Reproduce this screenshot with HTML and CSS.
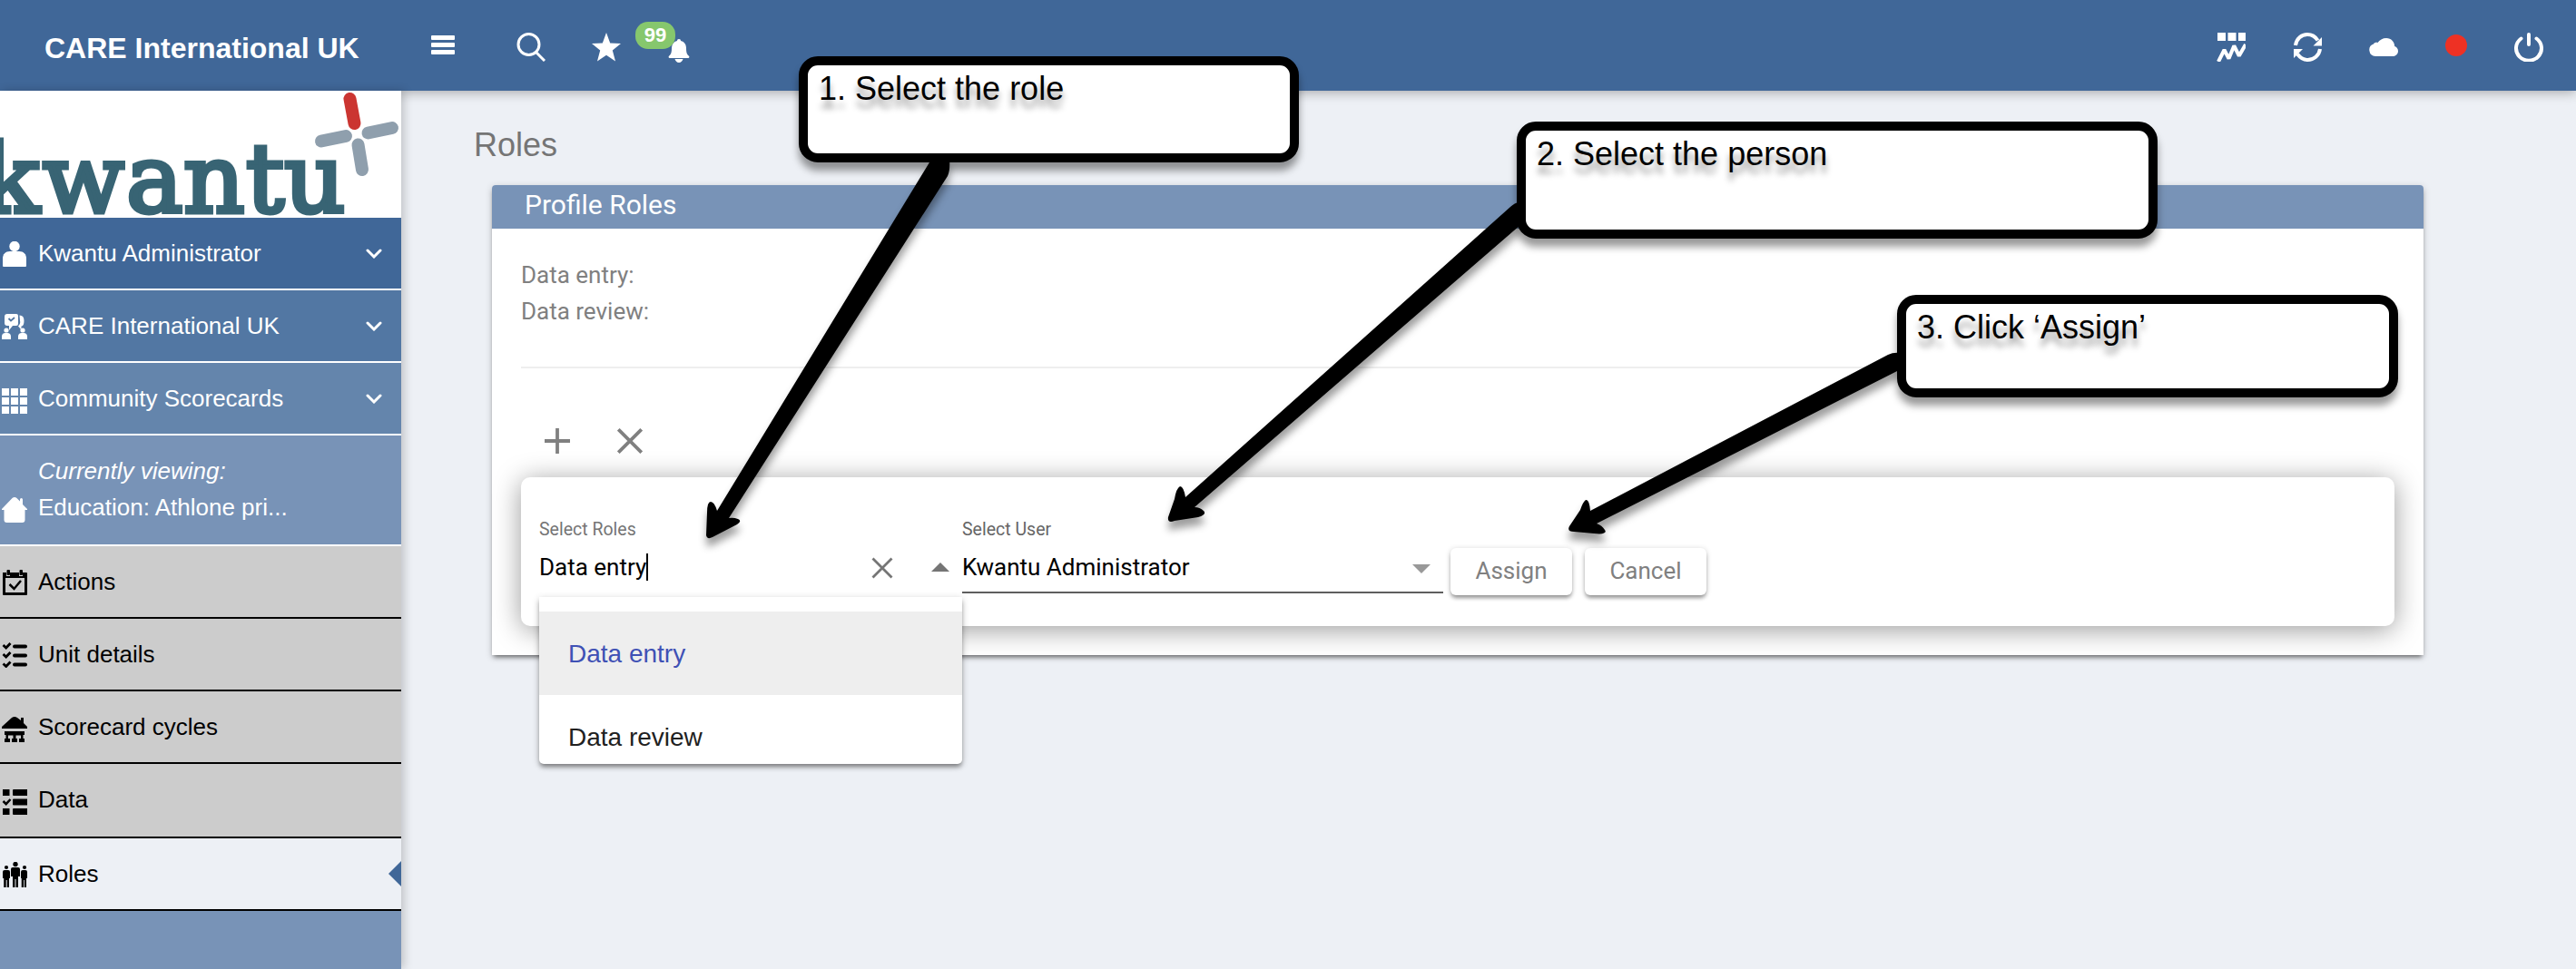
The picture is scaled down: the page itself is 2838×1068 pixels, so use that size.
FILE: index.html
```html
<!DOCTYPE html>
<html lang="en">
<head>
    <meta charset="UTF-8">
    <meta name="viewport" content="width=device-width, initial-scale=1.0">
    <title>Roles</title>
    <link rel="stylesheet" href="styles.css">
</head>
<body>

    <!-- Top bar -->
    <header class="topbar">
        <div class="brand">CARE International UK</div>
        <svg class="icon-menu" width="26" height="22" viewBox="0 0 26 22" fill="#fff">
            <rect x="0" y="0" width="26" height="5" rx="1"/>
            <rect x="0" y="8" width="26" height="5" rx="1"/>
            <rect x="0" y="16" width="26" height="5" rx="1"/>
        </svg>
        <svg class="icon-search" width="32" height="32" viewBox="0 0 32 32" fill="none" stroke="#fff" stroke-width="3">
            <circle cx="13.5" cy="13" r="11.5"/>
            <path d="M21.5 21.5L31 31"/>
        </svg>
        <svg class="icon-star" width="32" height="32" viewBox="0 0 32 32" fill="#fff">
            <path d="M16 0l4.2 11.5L32 12l-9.2 7.6L26 31.5 16 24.8 6 31.5l3.2-11.9L0 12l11.8-.5z"/>
        </svg>
        <div class="bell">
            <svg width="24" height="26" viewBox="0 0 24 26" fill="#fff">
                <path d="M12 0c1.4 0 2 .9 2 2 4 1 6 4 6 8.500 0 5.500 1.500 7 3 8.300.8.700.5 2.200-.8 2.200H1.800C.5 21 .2 19.500 1 18.800c1.500-1.300 3-2.800 3-8.300C4 6 6 3 10 2c0-1.100.6-2 2-2zM7.500 22h9c-.5 2.300-2.300 4-4.500 4s-4-1.700-4.500-4z"/>
            </svg>
            <span class="badge">99</span>
        </div>

        <div class="topbar-right">
            <svg width="32" height="32" viewBox="0 0 32 32">
                <path fill="#fff" d="M1 0h9v9H1zM12.500 0h9v9h-9zM24 0h8v9h-8z"/>
                <path fill="none" stroke="#fff" stroke-width="4" stroke-linejoin="bevel" d="M2 32l6.500-13 5 9.500 5.800-14 5.500 11L32 13"/>
            </svg>
            <svg width="32" height="32" viewBox="0 0 32 32">
                <path fill="none" stroke="#fff" stroke-width="4" d="M3 14C4 6.500 9.500 2 16 2c5 0 9 2.500 11.500 6.500M30 18c-1 7.500-7 12-13.500 12C12 30 8 27.500 5 23.500"/>
                <path fill="#fff" d="M32 5v9.500h-9.500zM1 28v-10h10z"/>
            </svg>
            <svg width="32" height="32" viewBox="0 0 32 32" fill="#fff">
                <path d="M7 26a7 7 0 0 1-2-13.600C5.500 11.300 7.500 10.500 9.500 11 11.500 8 15 6 19 6c5.500 0 9 4 9.200 9 2.300.7 3.800 2.800 3.800 5.200 0 3.200-2.500 5.800-5.700 5.800z"/>
            </svg>
            <span class="record-dot"></span>
            <svg width="32" height="32" viewBox="0 0 32 32" fill="none" stroke="#fff" stroke-width="4" stroke-linecap="round">
                <path d="M16 2v11M7.500 6.500a14 13.500 0 1 0 17 0"/>
            </svg>
        </div>
    </header>

    <div class="page">
        <!-- Sidebar -->
        <aside class="sidebar">
            <svg class="logo" width="442" height="140" viewBox="0 0 442 140">
                <text class="logo-text" y="134" x="-20 47 139 202 271 313">kwantu</text>
                <g stroke-width="14" stroke-linecap="round">
                    <path stroke="#cb3531" d="M385.500 9L390.500 36"/>
                    <path stroke="#8f9fad" d="M405.500 46.500L432 41M354 55.500L381 50M394.500 59.500L399 87"/>
                </g>
            </svg>

            <div class="nav-item level-1">
                <svg width="28" height="28" viewBox="0 0 28 28" fill="#fff">
                    <circle cx="14" cy="5.500" r="5.700"/>
                    <path d="M1 27V19c0-5 3-8 8-8h10c5 0 8 3 8 8v8q0 1-1 1H2q-1 0-1-1z"/>
                </svg>
                <span>Kwantu Administrator</span>
                <svg class="chevron" width="18" height="11" viewBox="0 0 18 11"><path d="M2 2l7 7 7-7"/></svg>
            </div>
            <div class="nav-item level-2">
                <svg width="28" height="28" viewBox="0 0 28 28" fill="#fff">
                    <path d="M6 0h10q2 0 2 2v9q0 2-2 2h-4l-4 5v-5H6q-3 0-3-3V3q0-3 3-3z"/>
                    <path d="M19.500 1.500q5 0 5 6t-3 6v4l-3.500-4q3-3 2-6z"/>
                    <circle cx="5" cy="18" r="2.600"/>
                    <circle cx="23" cy="18" r="2.600"/>
                    <path d="M0 28v-3q0-4 4-4h2q4 0 4 4v3zM18 28v-3q0-4 4-4h2q4 0 4 4v3z"/>
                    <path d="M7.500 5l2.500 2.500L14 4" fill="none" stroke="#5277a3" stroke-width="1.800"/>
                </svg>
                <span>CARE International UK</span>
                <svg class="chevron" width="18" height="11" viewBox="0 0 18 11"><path d="M2 2l7 7 7-7"/></svg>
            </div>
            <div class="nav-item level-3">
                <svg class="icon-low" width="28" height="28" viewBox="0 0 28 28" fill="#fff">
                    <path d="M0 0h8v8H0zM10 0h8v8h-8zM20 0h8v8h-8zM0 10h8v8H0zM10 10h8v8h-8zM20 10h8v8h-8zM0 20h8v8H0zM10 20h8v8h-8zM20 20h8v8h-8z"/>
                </svg>
                <span>Community Scorecards</span>
                <svg class="chevron" width="18" height="11" viewBox="0 0 18 11"><path d="M2 2l7 7 7-7"/></svg>
            </div>
            <div class="nav-item viewing">
                <svg width="28" height="28" viewBox="0 0 28 28" fill="#fff">
                    <path d="M0 13L11.500 1q2.500-2 5 0L20 4.500V2.500q0-1.500 1.500-1.500T23 2.500V8l5 5v1h-2.500v11q0 3-3 3h-17q-3 0-3-3V14H0z"/>
                </svg>
                <span><em>Currently viewing:</em><br>Education: Athlone pri...</span>
            </div>

            <div class="nav-item sub">
                <svg width="28" height="28" viewBox="0 0 28 28">
                    <path d="M1 3h4v4h4V3h10v4h4V3h4q1 0 1 1v23q0 1-1 1H2q-1 0-1-1zM4 9v16h21V9z" fill-rule="evenodd"/>
                    <rect x="5.500" y="0" width="3.500" height="6" rx="1"/>
                    <rect x="19.500" y="0" width="3.500" height="6" rx="1"/>
                    <path d="M8.500 16l5 5 7.500-9" fill="none" stroke="#000" stroke-width="2.500"/>
                </svg>
                <span>Actions</span>
            </div>
            <div class="nav-item sub">
                <svg width="28" height="28" viewBox="0 0 28 28" fill="none" stroke="#000">
                    <path stroke-width="4" stroke-linecap="round" d="M14 4.500h12M14 14.500h12M14 24.500h12"/>
                    <path stroke-width="2.800" d="M1.500 3l3.200 3L9.500 1M1.500 13l3.200 3 4.800-5M1.500 23.500l3.200 3 4.800-5"/>
                </svg>
                <span>Unit details</span>
            </div>
            <div class="nav-item sub">
                <svg class="icon-low" width="28" height="28" viewBox="0 0 28 28">
                    <path d="M0 11L11 1q3-2 6 0l4 3V1h3v6l4 4v2H0zM3 16h22v4h-1.500v4H25v4h-6v-4h2v-3.500h-5.500V24H17v4h-6v-4h1.500v-3.500H7V24h2v4H3v-4h1.500v-4H3z"/>
                </svg>
                <span>Scorecard cycles</span>
            </div>
            <div class="nav-item sub sub-tall">
                <svg class="icon-low" width="28" height="28" viewBox="0 0 28 28">
                    <path d="M1 0h7.500v7H1zM13 0h15v7H13q-1 0-1-1V1q0-1 1-1zM13 10.500h15v7H13q-1 0-1-1v-5q0-1 1-1zM1 21h7.500v7H1zM13 21h15v7H13q-1 0-1-1v-5q0-1 1-1z"/>
                    <path d="M1.500 13l3.200 3.200L9.500 11" fill="none" stroke="#000" stroke-width="2.500"/>
                </svg>
                <span>Data</span>
            </div>
            <div class="nav-item sub active">
                <svg width="28" height="28" viewBox="0 0 28 28">
                    <circle cx="15" cy="2.500" r="2.700"/>
                    <circle cx="5" cy="6" r="2.100"/>
                    <circle cx="25" cy="6" r="2.100"/>
                    <path d="M12 6h6q2 0 2 2v8h-2v12h-2.500v-9h-1v9H12V16h-2V8q0-2 2-2zM3 9h4q2 0 2 2v7H8v10H5.700v-8h-1v8H2.200V18H1v-7q0-2 2-2zM23 9h3q2 0 2 2v7h-1v10h-2.200v-8h-.8v8h-2.300V18H21v-7q0-2 2-2z"/>
                </svg>
                <span>Roles</span>
                <span class="active-arrow"></span>
            </div>
        </aside>

        <!-- Content -->
        <main class="content">
            <h1>Roles</h1>
            <section class="card">
                <h2>Profile Roles</h2>
                <div class="card-body">
                    <p>Data entry:</p>
                    <p>Data review:</p>
                    <hr>
                    <div class="tools">
                        <svg width="28" height="28" viewBox="0 0 28 28"><path d="M14 0v28M0 14h28"/></svg>
                        <svg width="28" height="28" viewBox="0 0 28 28"><path d="M1.300 1.300l25.400 25.400M26.700 1.300L1.300 26.700"/></svg>
                    </div>

                    <div class="assign-form">
                        <div class="field field-role">
                            <label>Select Roles</label>
                            <div class="control">
                                <span>Data entry</span><span class="caret"></span>
                                <svg class="clear" width="24" height="24" viewBox="0 0 24 24"><path d="M1.500 1.500l21 21M22.500 1.500l-21 21"/></svg>
                                <span class="tri-up"></span>
                            </div>
                            <div class="dropdown">
                                <div class="option selected">Data entry</div>
                                <div class="option">Data review</div>
                            </div>
                        </div>
                        <div class="field field-user">
                            <label>Select User</label>
                            <div class="control">
                                <span>Kwantu Administrator</span>
                                <span class="tri-down"></span>
                            </div>
                        </div>
                        <div class="buttons">
                            <button>Assign</button>
                            <button>Cancel</button>
                        </div>
                    </div>
                </div>
            </section>
        </main>
    </div>

    <!-- Walkthrough arrows and callouts -->
    <svg class="arrows" width="2838" height="1068" viewBox="0 0 2838 1068">
        <path d="M1027 174L790 563Q787 553 783 553Q779 553 779 565L778 590Q779 595 785 592L812 578Q818 574 813 572Q808 570 803 571L1044 194Q1047 188 1046 174Z"/>
        <path d="M1675 222Q1668 224 1664 228L1306 548Q1304 536 1300 536Q1296 538 1294 550L1287 570Q1286 577 1294 574L1320 570Q1330 567 1326 563Q1322 559 1316 559L1675 248Z"/>
        <path d="M2094 389Q2086 388 2080 391L1752 563Q1751 550 1747 551Q1744 553 1741 562L1729 580Q1726 586 1734 586L1762 588.500Q1771 588 1768 584Q1765 579 1759 577L2094 407Z"/>
    </svg>
    <div class="callout step-1">1. Select the role</div>
    <div class="callout step-2">2. Select the person</div>
    <div class="callout step-3">3. Click ‘Assign’</div>

</body>
</html>
```
FILE: styles.css
```css
/* General Styles */
* {
    box-sizing: border-box;
}

body {
    margin: 0;
    height: 1068px;
    position: relative;
    overflow: hidden;
    display: flex;
    flex-direction: column;
    background: #edf0f5;
    font-family: "Liberation Sans", Arial, sans-serif;
    font-size: 26px;
}

svg {
    display: block;
    flex-shrink: 0;
}

/* Top bar */
.topbar {
    position: relative;
    z-index: 1;
    height: 100px;
    flex-shrink: 0;
    padding: 4px 36px 0 49px;
    display: flex;
    align-items: center;
    background: #406798;
    box-shadow: 0 2px 12px rgba(0, 0, 0, 0.3);
}

.brand {
    width: 426px;
    padding-top: 2px;
    color: #fff;
    font-size: 32px;
    font-weight: bold;
    white-space: nowrap;
}

.icon-menu {
    margin-bottom: 4px;
}

.icon-search {
    margin-left: 68px;
}

.icon-star {
    margin-left: 51px;
}

.bell {
    position: relative;
    margin: 7px 0 0 52px;
}

.badge {
    position: absolute;
    left: -36px;
    top: -19px;
    width: 44px;
    height: 30px;
    border-radius: 14px;
    background: #86c76d;
    color: #fff;
    font-size: 22px;
    font-weight: bold;
    line-height: 29px;
    text-align: center;
}

.topbar-right {
    margin-left: auto;
    display: flex;
    align-items: center;
    gap: 52px;
}

.record-dot {
    width: 24px;
    height: 24px;
    margin-bottom: 4px;
    border-radius: 50%;
    background: #ee3124;
}

.page {
    flex: 1;
    display: flex;
}

/* Sidebar */
.sidebar {
    position: relative;
    z-index: 2;
    width: 442px;
    flex-shrink: 0;
    background: #7893b7;
    box-shadow: 3px 0 10px rgba(0, 0, 0, 0.2);
}

.logo {
    background: #fff;
}

.logo-text {
    font-family: "DejaVu Serif", serif;
    font-size: 105px;
    fill: #386474;
    stroke: #386474;
    stroke-width: 5px;
}

.nav-item {
    height: 80px;
    padding: 0 21px 0 2px;
    display: flex;
    align-items: center;
    gap: 12px;
    border-bottom: 2px solid #fff;
    color: #fff;
    line-height: 40px;
}

.nav-item > svg:first-child {
    margin-top: 2px;
}

.nav-item > .icon-low:first-child {
    margin-top: 6px;
}

.level-1 {
    background: #406798;
}

.level-2 {
    background: #5277a3;
}

.level-3 {
    background: #6485ac;
}

.viewing {
    height: 122px;
    padding-bottom: 2px;
}

.nav-item.viewing > svg:first-child {
    margin-top: 46px;
}

.chevron {
    margin-left: auto;
    fill: none;
    stroke: #fff;
    stroke-width: 3;
    stroke-linecap: round;
}

.sub {
    background: #ccc;
    color: #000;
    border-bottom-color: #000;
}

.sub-tall {
    height: 82px;
    padding-bottom: 2px;
}

.active {
    background: #edf0f5;
    padding-right: 0;
}

.active-arrow {
    margin-left: auto;
    border: 14px solid transparent;
    border-left: 0;
    border-right-color: #406798;
}

/* Content */
.content {
    flex: 1;
    padding: 38px 168px 0 100px;
}

h1 {
    margin: 0 0 22px -20px;
    font-size: 36px;
    font-weight: normal;
    line-height: 44px;
    color: #757575;
}

.card {
    background: #fff;
    border-radius: 4px 4px 0 0;
    box-shadow: 0 4px 5px -2px rgba(0, 0, 0, 0.5), 0 2px 8px rgba(0, 0, 0, 0.18);
    font-family: Roboto, sans-serif;
}

h2 {
    margin: 0;
    height: 48px;
    padding-left: 36px;
    border-radius: 4px 4px 0 0;
    background: #7893b7;
    color: #fff;
    font-size: 30px;
    font-weight: normal;
    line-height: 44px;
}

.card-body {
    padding: 31px 32px 32px;
}

p {
    margin: 0;
    line-height: 40px;
    color: #808080;
}

hr {
    height: 2px;
    margin: 41px 0 66px;
    border: 0;
    background: #eee;
}

.tools {
    display: flex;
    gap: 52px;
    padding-left: 26px;
    margin-bottom: 26px;
}

.tools path {
    stroke: #808080;
    stroke-width: 3.8;
}

/* Assign form */
.assign-form {
    height: 164px;
    padding: 46px 20px 0;
    display: flex;
    border-radius: 10px;
    box-shadow: 0 4px 30px rgba(0, 0, 0, 0.4);
}

.field {
    position: relative;
}

.field-role {
    width: 466px;
}

.field-user {
    width: 530px;
}

label {
    display: block;
    height: 24px;
    margin-bottom: 9px;
    font-size: 19.5px;
    line-height: 24px;
    color: #757575;
}

.field-user label {
    color: #666;
}

.control {
    height: 40px;
    display: flex;
    align-items: center;
    line-height: 40px;
}

.field-user .control {
    height: 49px;
    padding: 0 14px 7px 0;
    border-bottom: 2px solid #5e5e5e;
}

.caret {
    width: 2px;
    height: 30px;
    background: #000;
}

.clear {
    margin-left: auto;
    margin-top: 2px;
}

.clear path {
    stroke: #757575;
    stroke-width: 2.8;
}

.tri-up {
    margin: 0 14px 0 42px;
    border: 10px solid transparent;
    border-top: 0;
    border-bottom-color: #757575;
}

.tri-down {
    margin: 4px 0 0 auto;
    border: 10px solid transparent;
    border-bottom: 0;
    border-top-color: #999;
}

.dropdown {
    position: absolute;
    left: 0;
    top: 86px;
    width: 466px;
    height: 184px;
    padding-top: 16px;
    overflow: hidden;
    background: #fff;
    border-radius: 0 0 5px 5px;
    box-shadow: 0 4px 5px -1px rgba(0, 0, 0, 0.4), 0 2px 8px rgba(0, 0, 0, 0.2);
    font-family: "Liberation Sans", Arial, sans-serif;
    font-size: 28px;
}

.option {
    height: 92px;
    padding-left: 32px;
    line-height: 93px;
    color: #212121;
}

.option.selected {
    background: #eee;
    color: #3f51b5;
}

.buttons {
    display: flex;
    gap: 14px;
    margin: 32px 0 0 8px;
}

.buttons button {
    width: 134px;
    height: 52px;
    padding: 0 0 2px;
    border: 0;
    border-radius: 6px;
    background: #fff;
    box-shadow: 0 4px 4px -1px rgba(0, 0, 0, 0.35), 0 1px 6px rgba(0, 0, 0, 0.18);
    font-family: Roboto, sans-serif;
    font-size: 26px;
    color: #808080;
}

/* Walkthrough */
.arrows {
    position: absolute;
    left: 0;
    top: 0;
    z-index: 3;
    filter: drop-shadow(0 9px 4px rgba(0, 0, 0, 0.38));
}

.callout {
    position: absolute;
    z-index: 4;
    padding: 5px 12px;
    border: 10px solid #000;
    border-radius: 21px;
    background: #fff;
    box-shadow: 0 9px 9px rgba(0, 0, 0, 0.4);
    color: #000;
    font-size: 36px;
    line-height: 42px;
    text-shadow: 0 9px 7px rgba(0, 0, 0, 0.4);
}

.step-1 {
    left: 880px;
    top: 62px;
    width: 551px;
    height: 117px;
}

.step-2 {
    left: 1671px;
    top: 134px;
    width: 706px;
    height: 129px;
}

.step-3 {
    left: 2090px;
    top: 325px;
    width: 552px;
    height: 113px;
}
```
